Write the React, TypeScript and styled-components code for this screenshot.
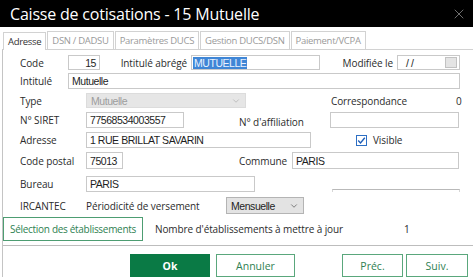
import React from 'react';
import styled, { createGlobalStyle } from 'styled-components';
import { X, ChevronDown } from 'lucide-react';

const GlobalStyle = createGlobalStyle`
  html, body {
    margin: 0;
    padding: 0;
    background: #ffffff;
  }
  * {
    box-sizing: border-box;
  }
`;

const Window = styled.div`
  width: 473px;
  height: 277px;
  display: flex;
  flex-direction: column;
  background: #ffffff;
  font-family: 'Open Sans', 'Noto Sans', sans-serif;
  overflow: hidden;
`;

const TitleBar = styled.div`
  height: 27px;
  flex: none;
  background: #000000;
  color: #ffffff;
  display: flex;
  align-items: center;
  justify-content: space-between;
  padding: 0 6px 0 10px;
  font-size: 16px;
  letter-spacing: -0.2px;
  svg {
    color: #8a8a8a;
  }
`;

const TabStrip = styled.div`
  height: 18px;
  margin-top: 4px;
  flex: none;
  display: flex;
  align-items: stretch;
  padding-left: 3px;
`;

const Tab = styled.div<{ active?: boolean }>`
  display: flex;
  align-items: center;
  padding: 0 4px;
  margin-right: 1px;
  border: 1px solid #d2d2d2;
  border-bottom: none;
  font-size: 9.5px;
  letter-spacing: -0.3px;
  color: ${({ active }) => (active ? '#333333' : '#9a9a9a')};
  background: #ffffff;
  position: relative;
  top: ${({ active }) => (active ? '1px' : '0')};
`;

const Panel = styled.div`
  flex: 1;
  margin-left: 2px;
  border-left: 1px solid #c4c4c4;
  border-top: 1px solid #d2d2d2;
  display: flex;
  flex-direction: column;
`;

const Row = styled.div<{ h: number; mt: number; pl?: number }>`
  display: flex;
  align-items: center;
  height: ${({ h }) => h}px;
  margin-top: ${({ mt }) => mt}px;
  padding-left: ${({ pl }) => (pl === undefined ? 17 : pl)}px;
  flex: none;
`;

const Label = styled.span<{ w?: number; right?: boolean; dy?: number }>`
  flex: none;
  width: ${({ w }) => (w ? `${w}px` : 'auto')};
  text-align: ${({ right }) => (right ? 'right' : 'left')};
  padding-right: ${({ right }) => (right ? '4px' : '0')};
  font-size: 10px;
  letter-spacing: -0.1px;
  color: #2c2c2c;
  white-space: nowrap;
  position: relative;
  top: ${({ dy }) => dy || 0}px;
`;

const Spacer = styled.div<{ w: number }>`
  flex: none;
  width: ${({ w }) => w}px;
`;

const Field = styled.div<{ w: number; right?: boolean }>`
  flex: none;
  width: ${({ w }) => w}px;
  height: 100%;
  border: 1px solid #c9c9c9;
  background: #ffffff;
  display: flex;
  align-items: center;
  justify-content: ${({ right }) => (right ? 'flex-end' : 'flex-start')};
  padding: 0 3px;
  font-family: 'Liberation Sans', Arial, sans-serif;
  font-size: 10.5px;
  letter-spacing: -0.45px;
  color: #1e1e1e;
  white-space: nowrap;
  overflow: hidden;
`;

const Selected = styled.span`
  background: #3f86d6;
  color: #eaf2ff;
  padding: 0 1px;
  margin-left: -2px;
`;

const DateField = styled(Field)`
  justify-content: space-between;
  padding-left: 8px;
  padding-right: 2px;
`;

const MiniButton = styled.div`
  width: 12px;
  height: 11px;
  background: #e4e4e4;
  border: 1px solid #c2c2c2;
`;

const SelectBox = styled.div<{ w: number; disabled?: boolean }>`
  flex: none;
  width: ${({ w }) => w}px;
  height: 100%;
  display: flex;
  align-items: center;
  justify-content: space-between;
  padding: 0 4px;
  background: ${({ disabled }) => (disabled ? '#e6e6e6' : '#e3e3e3')};
  border: 1px solid ${({ disabled }) => (disabled ? '#dcdcdc' : '#b4b4b4')};
  font-family: 'Liberation Sans', Arial, sans-serif;
  font-size: 10.5px;
  letter-spacing: -0.45px;
  color: ${({ disabled }) => (disabled ? '#9d9d9d' : '#1e1e1e')};
  svg {
    color: ${({ disabled }) => (disabled ? '#b8b8b8' : '#6a6a6a')};
  }
`;

const Value = styled.span<{ w: number }>`
  flex: none;
  width: ${({ w }) => w}px;
  text-align: right;
  font-size: 10px;
  color: #2c2c2c;
`;

const HiddenLine = styled.div<{ w: number }>`
  flex: none;
  width: ${({ w }) => w}px;
  align-self: flex-end;
  border-top: 1px solid #b9b9b9;
  height: 3px;
  border-left: 1px solid #d6d6d6;
  border-right: 1px solid #d6d6d6;
`;

const CheckBox = styled.div`
  flex: none;
  width: 11px;
  height: 11px;
  border: 1px solid #2d6fc4;
  background: #ffffff;
  display: flex;
  align-items: center;
  justify-content: center;
  margin-right: 6px;
`;

const GreenOutline = styled.div<{ w: number }>`
  flex: none;
  width: ${({ w }) => w}px;
  height: 100%;
  border: 1px solid #4d9d72;
  display: flex;
  align-items: center;
  justify-content: center;
  font-size: 10px;
  letter-spacing: -0.3px;
  white-space: nowrap;
  color: #2f7f52;
  background: #ffffff;
`;

const Separator = styled.div`
  margin-top: 4px;
  height: 1px;
  background: #bdbdbd;
  flex: none;
`;

const Footer = styled.div`
  display: flex;
  align-items: stretch;
  height: 23px;
  margin-top: 8px;
  padding-left: 127px;
  flex: none;
`;

const FooterButton = styled.div<{ w: number; primary?: boolean; ml: number }>`
  flex: none;
  width: ${({ w }) => w}px;
  margin-left: ${({ ml }) => ml}px;
  display: flex;
  align-items: center;
  justify-content: center;
  font-size: 10.5px;
  font-weight: ${({ primary }) => (primary ? 700 : 400)};
  color: ${({ primary }) => (primary ? '#ffffff' : '#2f7f52')};
  background: ${({ primary }) => (primary ? '#0a7a45' : '#ffffff')};
  border: 1px solid ${({ primary }) => (primary ? '#0a7a45' : '#5aa77c')};
`;

const tabs = ['Adresse', 'DSN / DADSU', 'Paramètres DUCS', 'Gestion DUCS/DSN', 'Paiement/VCPA'];

const App: React.FC = () => {
  return (
    <>
      <GlobalStyle />
      <Window>
        <TitleBar>
          <span>Caisse de cotisations - 15 Mutuelle</span>
          <X size={16} strokeWidth={1.2} />
        </TitleBar>

        <TabStrip>
          {tabs.map((t, i) => (
            <Tab key={t} active={i === 0}>
              {t}
            </Tab>
          ))}
        </TabStrip>

        <Panel>
          <Row h={15} mt={5}>
            <Label w={48}>Code</Label>
            <Field w={32} right>15</Field>
            <Label w={91} right>Intitulé abrégé</Label>
            <Field w={129}>
              <Selected>MUTUELLE</Selected>
            </Field>
            <Label w={77} right>Modifiée le</Label>
            <DateField w={63}>
              <span>/ /</span>
              <MiniButton />
            </DateField>
          </Row>

          <Row h={16} mt={3}>
            <Label w={48}>Intitulé</Label>
            <Field w={392}>Mutuelle</Field>
          </Row>

          <Row h={15} mt={4}>
            <Label w={66}>Type</Label>
            <SelectBox w={160} disabled>
              <span>Mutuelle</span>
              <ChevronDown size={10} />
            </SelectBox>
            <Spacer w={85} />
            <Label w={125}>Correspondance</Label>
            <Value w={5}>0</Value>
          </Row>

          <Row h={16} mt={4}>
            <Label w={66}>N° SIRET</Label>
            <Field w={98}>77568534003557</Field>
            <Spacer w={55} />
            <Label w={91} dy={2}>N° d'affiliation</Label>
            <Field w={129} />
          </Row>

          <Row h={16} mt={4}>
            <Label w={66}>Adresse</Label>
            <Field w={225}>1 RUE BRILLAT SAVARIN</Field>
            <Spacer w={45} />
            <CheckBox>
              <svg width="9" height="9" viewBox="0 0 9 9">
                <path d="M1.2 4.6 L3.5 6.9 L7.8 1.8" fill="none" stroke="#1f5fb8" strokeWidth="1.4" />
              </svg>
            </CheckBox>
            <Label>Visible</Label>
          </Row>

          <Row h={17} mt={4}>
            <Label w={66}>Code postal</Label>
            <Field w={37}>75013</Field>
            <Spacer w={116} />
            <Label w={53}>Commune</Label>
            <Field w={167}>PARIS</Field>
          </Row>

          <Row h={16} mt={7}>
            <Label w={66}>Bureau</Label>
            <Field w={169}>PARIS</Field>
            <Spacer w={77} />
            <HiddenLine w={128} />
          </Row>

          <Row h={17} mt={5}>
            <Label w={66}>IRCANTEC</Label>
            <Label w={140}>Périodicité de versement</Label>
            <SelectBox w={78}>
              <span>Mensuelle</span>
              <ChevronDown size={10} />
            </SelectBox>
          </Row>

          <Row h={24} mt={3} pl={0}>
            <GreenOutline w={140}>Sélection des établissements</GreenOutline>
            <Spacer w={12} />
            <Label w={249}>Nombre d'établissements à mettre à jour</Label>
            <Label>1</Label>
          </Row>

          <Separator />

          <Footer>
            <FooterButton w={80} ml={0} primary>Ok</FooterButton>
            <FooterButton w={79} ml={6}>Annuler</FooterButton>
            <FooterButton w={61} ml={47}>Préc.</FooterButton>
            <FooterButton w={62} ml={3}>Suiv.</FooterButton>
          </Footer>
        </Panel>
      </Window>
    </>
  );
};

export default App;
